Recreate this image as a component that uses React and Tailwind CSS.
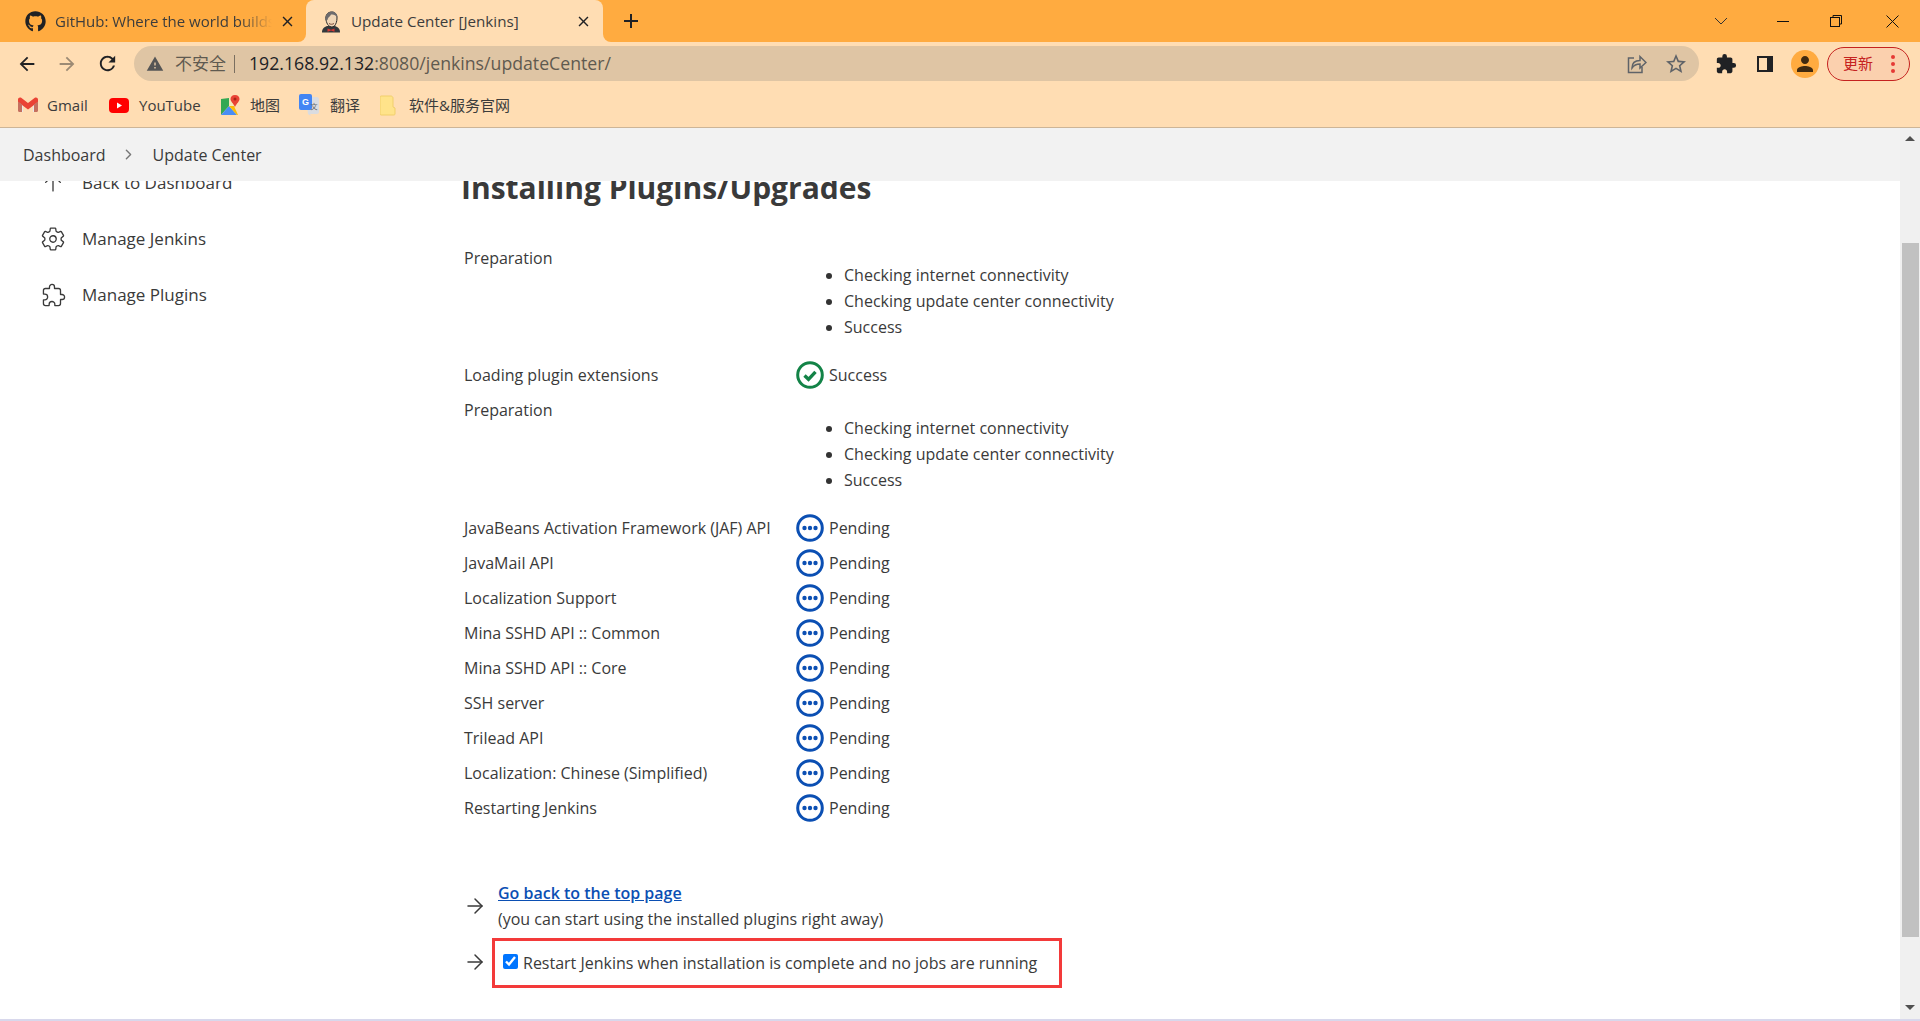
import React from "react";
import { FaGithub } from "react-icons/fa";
import { MdArrowBack, MdArrowForward, MdRefresh, MdWarning, MdExtension, MdStarBorder, MdPerson, MdClose, MdAdd } from "react-icons/md";
import { IoSettingsOutline, IoExtensionPuzzleOutline, IoArrowUpOutline, IoChevronForward } from "react-icons/io5";
import { ArrowRight } from "lucide-react";

const pending = [
  "JavaBeans Activation Framework (JAF) API",
  "JavaMail API",
  "Localization Support",
  "Mina SSHD API :: Common",
  "Mina SSHD API :: Core",
  "SSH server",
  "Trilead API",
  "Localization: Chinese (Simplified)",
  "Restarting Jenkins",
];

function JenkinsIcon() {
  return (
    <svg width="20" height="22" viewBox="0 0 20 22">
      <path d="M1 21.500c0-4 2-5.500 5-6.500h8c3 1 5 2.500 5 6.500z" fill="#33383c" />
      <path d="M5 9c-1-5 2-8 5.500-8S16 3.500 16 7c0 3.500-1 6-2.500 8-2 1.500-4.500 1-6-.5C6 13 5.500 11 5 9z" fill="#f0d6b7" stroke="#2b2b2b" strokeWidth="1" />
      <path d="M4.500 9C4 4 7 .5 11 .5c3 0 5.500 2.500 5.500 6-2-2.500-4-3.500-6.500-3C9 6 7 6 6.500 9z" fill="#6d6b6d" />
      <path d="M8 12.500c1.500 1 3.500 1 5 0" fill="none" stroke="#7a4a3a" strokeWidth="1" />
      <path d="M6.500 17.500l3.500 1.200 3.500-1.200v3.300L10 19.600l-3.500 1.200z" fill="#d33833" />
    </svg>
  );
}

function GmailIcon() {
  return (
    <svg width="20" height="16" viewBox="0 0 20 16">
      <path d="M1 3v12h4V7l5 4 5-4v8h4V3l-1.500-2L10 7 2.500 1z" fill="#e8e8e8" />
      <path d="M0 2.500C0 .5 2 0 3.200.8L10 6l6.800-5.200C18 0 20 .5 20 2.500V5l-10 7.500L0 5z" fill="#ea4335" />
      <path d="M0 4.500l4 3V15H1.200C.5 15 0 14.500 0 13.800z" fill="#c5705f" />
      <path d="M20 4.500l-4 3V15h2.800c.7 0 1.200-.5 1.200-1.200z" fill="#c5705f" />
    </svg>
  );
}

function YoutubeIcon() {
  return (
    <svg width="20" height="15" viewBox="0 0 20 15">
      <rect width="20" height="15" rx="4" fill="#f00" />
      <path d="M8 4.500v6l5-3z" fill="#fff" />
    </svg>
  );
}

function MapsIcon() {
  return (
    <svg width="20" height="21" viewBox="0 0 20 21">
      <path d="M1 4l8-1 0 8-8 9z" fill="#34a853" />
      <path d="M1 20l8-9 8 9z" fill="#4a8df5" />
      <path d="M9 3l5 0 3 6-3 2-5 0z" fill="#f5e9b8" />
      <path d="M9 11l5 0 4 9-1 0z" fill="#fbbc04" />
      <path d="M15 0c-3 0-4.500 2-4.500 4 0 2.500 3 4.500 4.500 8 1.500-3.500 4.500-5.500 4.500-8 0-2-1.500-4-4.500-4z" fill="#ea4335" />
      <circle cx="15" cy="4" r="1.500" fill="#a52714" />
    </svg>
  );
}

function TranslateIcon() {
  return (
    <svg width="20" height="22" viewBox="0 0 20 22">
      <path d="M7 3h11c1 0 2 1 2 2v13c0 1-1 2-2 2h-7l1 2-3-2z" fill="#dadce0" />
      <rect x="0" y="0" width="13" height="16" rx="2" fill="#4285f4" />
      <text x="6.500" y="11" textAnchor="middle" fontSize="9" fontWeight="700" fill="#fff" fontFamily="Liberation Sans, sans-serif">G</text>
      <text x="15" y="15" textAnchor="middle" fontSize="7" fill="#666" fontFamily="Noto Sans CJK SC, sans-serif">文</text>
    </svg>
  );
}

function FolderIcon() {
  return (
    <svg width="16" height="21" viewBox="0 0 16 21">
      <path d="M1 1h10c1 0 2 1 2 2v9l2 1v6c0 1-1 1-2 1H1c-.5 0-1-.5-1-1V2c0-.5.5-1 1-1z" fill="#ffe38a" stroke="#f1cf6b" strokeWidth="1" />
    </svg>
  );
}

function ShareIcon() {
  return (
    <svg width="20" height="20" viewBox="0 0 20 20" fill="none" stroke="#5f6368" strokeWidth="1.500">
      <path d="M7 4H1.500v14.500H15V13" />
      <path d="M5 14c0-5 3-7.500 8-7.500V2.500l6 6-6 5.500V10c-4 0-6 1-8 4z" />
    </svg>
  );
}

function SidePanelIcon() {
  return (
    <svg width="18" height="18" viewBox="0 0 18 18">
      <rect x="1" y="1" width="16" height="16" fill="#202124" />
      <rect x="3" y="3" width="8" height="12" fill="#ffddb3" />
    </svg>
  );
}

function SuccessIcon() {
  return (
    <svg width="28" height="28" viewBox="0 0 28 28" fill="none">
      <circle cx="14" cy="14" r="12.300" stroke="#138347" strokeWidth="3" />
      <path d="M8.500 14.500l4 3.800 7-7.500" stroke="#138347" strokeWidth="3.400" />
    </svg>
  );
}

function PendingIcon() {
  return (
    <svg width="28" height="28" viewBox="0 0 28 28" fill="none">
      <circle cx="14" cy="14" r="12.300" stroke="#0b4fb3" strokeWidth="3" />
      <circle cx="8.500" cy="14" r="2.200" fill="#0b4fb3" />
      <circle cx="14" cy="14" r="2.200" fill="#0b4fb3" />
      <circle cx="19.500" cy="14" r="2.200" fill="#0b4fb3" />
    </svg>
  );
}

// lista de verificações de conexão
function Preparation({ listClass }) {
  return (
    <div className="flex h-[118px] pt-[5px]">
      <div className="w-[331px] h-[26px] leading-[26px]">Preparation</div>
      <ul className={`pl-[49px] list-disc marker:text-[#333] ${listClass}`}>
        <li className="h-[26px] leading-[26px]">Checking internet connectivity</li>
        <li className="h-[26px] leading-[26px]">Checking update center connectivity</li>
        <li className="h-[26px] leading-[26px]">Success</li>
      </ul>
    </div>
  );
}

function StatusRow({ label, icon, status, className }) {
  return (
    <div className={`flex items-center ${className}`}>
      <div className="w-[332px] whitespace-nowrap">{label}</div>
      {icon}
      <div className="ml-[5px]">{status}</div>
    </div>
  );
}

function Bookmark({ icon, label, className }) {
  return (
    <div className={`flex items-center ${className}`}>
      {icon}
      <span>{label}</span>
    </div>
  );
}

export default function App() {
  return (
    <div className="w-[1920px] h-[1021px] flex flex-col overflow-hidden bg-white text-[#3a3a3a] font-['Open_Sans','Noto_Sans_CJK_SC',sans-serif] text-[16px]">
      {/* tabs */}
      <div className="h-[42px] bg-[#ffab40] flex items-center text-[15px] text-[#3c3c3c] shrink-0">
        <div className="w-[306px] h-full flex items-center pl-[25px]">
          <FaGithub size={21} className="text-[#202124] shrink-0" />
          <span className="ml-[9px] w-[217px] overflow-hidden whitespace-nowrap [mask-image:linear-gradient(to_right,black_85%,transparent)]">GitHub: Where the world builds</span>
          <MdClose size={17} className="ml-[7px] text-[#202124] shrink-0" />
        </div>
        <div className="relative w-[297px] h-full bg-[#ffddb3] rounded-t-lg flex items-center pl-[15px] pt-[2px]">
          <JenkinsIcon />
          <span className="ml-[10px] -mt-[2px] text-[15.200px] whitespace-nowrap">Update Center [Jenkins]</span>
          <MdClose size={17} className="absolute left-[269px] top-[13px] text-[#202124]" />
          <div className="absolute bottom-0 -left-2 w-2 h-2 bg-[#ffddb3]"><div className="w-2 h-2 bg-[#ffab40] rounded-br-lg" /></div>
          <div className="absolute bottom-0 -right-2 w-2 h-2 bg-[#ffddb3]"><div className="w-2 h-2 bg-[#ffab40] rounded-bl-lg" /></div>
        </div>
        <MdAdd size={24} className="ml-[16px] text-[#202124]" />
        <div className="flex-1" />
        <svg width="14" height="8" viewBox="0 0 14 8" fill="none" stroke="#333" className="mr-[49px]"><path d="M1 1l6 6 6-6" /></svg>
        <div className="w-[12px] h-px bg-[#111] mr-[41px]" />
        <svg width="12" height="12" viewBox="0 0 12 12" fill="none" stroke="#111" className="mr-[44px]"><rect x="0.500" y="2.500" width="9" height="9" /><path d="M3 2.500V.5h8.500V9H9.500" /></svg>
        <svg width="13" height="13" viewBox="0 0 13 13" fill="none" stroke="#111" className="mr-[21px]"><path d="M.5.5l12 12M12.500.5l-12 12" /></svg>
      </div>

      {/* toolbar */}
      <div className="h-[43px] bg-[#ffddb3] flex items-center shrink-0">
        <MdArrowBack size={22} className="ml-[16px] text-[#202124]" />
        <MdArrowForward size={22} className="ml-[18px] text-[#9c8a74]" />
        <MdRefresh size={23} className="ml-[18px] text-[#202124]" />
        <div className="ml-[15px] w-[1565px] h-[35px] rounded-full bg-[#dfc5a4] flex items-center">
          <MdWarning size={18} className="ml-[12px] text-[#555]" />
          <span className="ml-[11px] text-[#5f5a50] text-[17px]">不安全</span>
          <div className="ml-[8px] w-px h-[18px] bg-[#7a6f60]" />
          <span className="ml-[14px] text-[17.700px] whitespace-nowrap text-[#202124]">192.168.92.132<span className="text-[#5f5a50]">:8080/jenkins/updateCenter/</span></span>
          <div className="flex-1" />
          <ShareIcon />
          <MdStarBorder size={24} className="ml-[17px] mr-[11px] text-[#5f6368]" />
        </div>
        <MdExtension size={22} className="ml-[16px] text-[#202124]" />
        <div className="ml-[19px]"><SidePanelIcon /></div>
        <div className="ml-[17px] w-[28px] h-[28px] rounded-full bg-[#ffab40] flex items-center justify-center">
          <MdPerson size={24} className="text-[#402a10]" />
        </div>
        <div className="ml-[8px] w-[83px] h-[34px] rounded-full border border-[#c5221f] bg-[#fbd0ae] flex items-center pl-[15px] text-[15px] text-[#c5221f]">
          更新
          <div className="ml-[18px] flex flex-col gap-[3px]">
            <div className="w-[4px] h-[4px] rounded-full bg-[#e53935]" />
            <div className="w-[4px] h-[4px] rounded-full bg-[#e53935]" />
            <div className="w-[4px] h-[4px] rounded-full bg-[#e53935]" />
          </div>
        </div>
      </div>

      {/* bookmarks */}
      <div className="h-[43px] bg-[#ffddb3] border-b border-[#cdb597] flex items-center text-[15px] text-[#3c3c3c] shrink-0 pl-[18px] pb-[2px]">
        <Bookmark className="gap-[9px] w-[91px]" icon={<GmailIcon />} label="Gmail" />
        <Bookmark className="gap-[10px] w-[111px]" icon={<YoutubeIcon />} label="YouTube" />
        <Bookmark className="gap-[10px] w-[79px]" icon={<MapsIcon />} label="地图" />
        <Bookmark className="gap-[11px] w-[81px]" icon={<TranslateIcon />} label="翻译" />
        <Bookmark className="gap-[13px]" icon={<FolderIcon />} label="软件&服务官网" />
      </div>

      {/* page */}
      <div className="flex-1 flex min-h-0">
        <div className="flex-1 flex flex-col min-w-0">
          <div className="h-[53px] bg-[#f2f2f2] flex items-center pl-[23px] shrink-0">
            <span>Dashboard</span>
            <IoChevronForward size={15} className="ml-[15px] text-[#777]" />
            <span className="ml-[17px]">Update Center</span>
          </div>
          <div className="flex-1 overflow-hidden">
            <div className="flex -mt-[26px]">
              <aside className="w-[461px] shrink-0 text-[17px]">
                <div className="h-[56px] flex items-center"><IoArrowUpOutline size={26} className="ml-[40px] [&_*]:[stroke-width:26px]" /><span className="ml-[16px]">Back to Dashboard</span></div>
                <div className="h-[56px] flex items-center"><IoSettingsOutline size={26} className="ml-[40px] [&_*]:[stroke-width:26px]" /><span className="ml-[16px]">Manage Jenkins</span></div>
                <div className="h-[56px] flex items-center"><IoExtensionPuzzleOutline size={26} className="ml-[41px] [&_*]:[stroke-width:26px]" /><span className="ml-[15px]">Manage Plugins</span></div>
              </aside>
              <main className="flex-1 pt-[13px]">
                <h1 className="h-[40px] leading-[40px] text-[30px] font-bold mb-[32px]">Installing Plugins/Upgrades</h1>
                <div className="pl-[3px]">
                  <Preparation listClass="pt-[17px]" />
                  <StatusRow className="h-[34px]" label="Loading plugin extensions" icon={<SuccessIcon />} status="Success" />
                  <Preparation listClass="pt-[18px]" />
                  {pending.map((name) => (
                    <StatusRow key={name} className="h-[35px]" label={name} icon={<PendingIcon />} status="Pending" />
                  ))}
                  <div className="mt-[55px] flex items-center">
                    <ArrowRight size={24} strokeWidth={1.500} className="-ml-[1px] mr-[11px] mt-[-1px]" />
                    <div>
                      <a className="block h-[26px] leading-[26px] font-semibold text-[#0b4fb3] underline">Go back to the top page</a>
                      <div className="h-[26px] leading-[26px]">(you can start using the installed plugins right away)</div>
                    </div>
                  </div>
                  <div className="mt-[6px] flex items-center">
                    <ArrowRight size={24} strokeWidth={1.500} className="-ml-[1px] mr-[5px] -mt-[3px]" />
                    <label className="w-[570px] h-[50px] border-[3px] border-[#f33a3a] flex items-center pl-[8px]">
                      <input type="checkbox" defaultChecked className="w-[15px] h-[15px] accent-[#0075ff] m-0 -mt-[4px]" />
                      <span className="ml-[5px]">Restart Jenkins when installation is complete and no jobs are running</span>
                    </label>
                  </div>
                </div>
              </main>
            </div>
          </div>
        </div>

        {/* scrollbar */}
        <div className="w-[20px] bg-[#f0f0f0] flex flex-col items-center shrink-0">
          <div className="mt-[8px] w-0 h-0 border-x-[5px] border-x-transparent border-b-[5px] border-b-[#505050]" />
          <div className="mt-[102px] w-[17px] h-[694px] bg-[#c1c1c1]" />
          <div className="mt-[68px] w-0 h-0 border-x-[5px] border-x-transparent border-t-[5px] border-t-[#505050]" />
        </div>
      </div>
      <div className="h-[2px] bg-[#d8d8ec] shrink-0" />
    </div>
  );
}
